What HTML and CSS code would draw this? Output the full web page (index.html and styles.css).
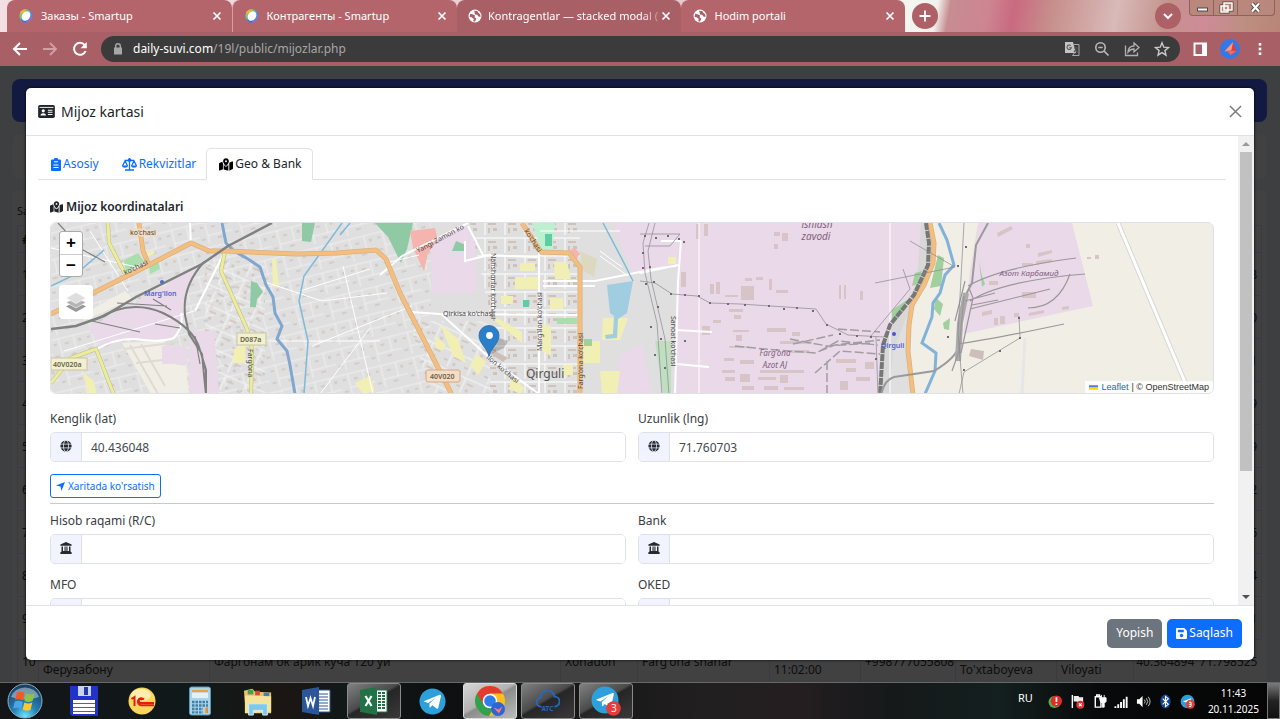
FILE: index.html
```html
<!DOCTYPE html>
<html lang="uz">
<head>
<meta charset="utf-8">
<meta name="viewport" content="width=device-width, initial-scale=1">
<title>Mijoz kartasi</title>
<link rel="stylesheet" href="styles.css">
</head>
<body>
<svg class="defs" width="0" height="0" aria-hidden="true">
  <defs>
    <linearGradient id="swirl" x1="0" y1="0" x2="1" y2="1"><stop offset="0" stop-color="#f6d94a"/><stop offset=".3" stop-color="#7cc36a"/><stop offset=".6" stop-color="#3f8fe0"/><stop offset="1" stop-color="#e0508c"/></linearGradient>
    <symbol id="i-smartup" viewBox="0 0 16 16"><circle cx="8" cy="8" r="7.6" fill="url(#swirl)"/><path d="M1 5a7.6 7.6 0 0 1 7-4.6L6 4z" fill="#f0b63a"/><path d="M2 12a7.6 7.6 0 0 0 6 3.6L9 12z" fill="#3a6fe0"/><ellipse cx="8" cy="8" rx="4.6" ry="5.8" transform="rotate(35 8 8)" fill="#fff"/></symbol>
    <symbol id="i-globe-solid" viewBox="0 0 16 16"><circle cx="8" cy="8" r="7.4" fill="#fff"/><path d="M2.6 5.4 6 6.2l2 1.2-.4 2L9.6 11 8 14.4a6.6 6.6 0 0 1-2-.4L6.600 11.500 4 9.500 1.800 9zM7 2l3.500.300L12 4.500l2 1.500.300 3-2.300-.500-1.500-2L8 6.400 7.500 4z" fill="#a95f66"/></symbol>
    <symbol id="i-x" viewBox="0 0 10 10"><path d="M1.500 1.500l7 7M8.500 1.500l-7 7" stroke="currentColor" stroke-width="1.700" fill="none"/></symbol>
    <symbol id="i-map" viewBox="0 0 576 512"><path fill="currentColor" d="M408 120c0 54.600-73.100 151.900-105.200 192-7.700 9.600-22 9.600-29.600 0C241.100 271.900 168 174.600 168 120 168 53.700 221.700 0 288 0s120 53.700 120 120zm-120 40a40 40 0 1 0 0-80 40 40 0 0 0 0 80zm136 44c5-11 9-22 12-33l106-42c16-6 34 5 34 23v265c0 10-6 19-15 22L424 512zM137.600 138.300c2.400 14.100 7.200 28.300 12.800 41.500 3 8 7 16 12 24V451L32.900 503C17 509 0 498 0 480V216c0-10 6-19 15-22zM327.800 332c14-17 36-46 57-78v258l-193-55V252c21 33 43 62 57 80 20 25 59 25 79 0z"/></symbol>
    <symbol id="i-globe" viewBox="0 0 16 16"><circle cx="8" cy="8" r="7.500" fill="#26292d"/><g fill="none" stroke="#eef2fd" stroke-width="1"><ellipse cx="8" cy="8" rx="3.400" ry="7.500"/><path d="M0 5.500h16M0 10.500h16"/></g></symbol>
    <symbol id="i-bank" viewBox="0 0 16 16"><path fill="#26292d" d="M8 0l7.500 3.300V5H.5V3.300zM2 6h2v6h2V6h1.500v6h1V6H10v6h2V6h2v6.500l1.500 1V16H.5v-2.500l1.500-1z"/></symbol>
    <symbol id="i-tg" viewBox="0 0 28 28"><circle cx="14" cy="14" r="13.500" fill="#2da0dc"/><path d="M5.500 13.500 21.500 7c1-.300 1.600.300 1.300 1.400L20 20.500c-.300 1-1 1.200-1.800.700l-4.300-3.200-2.100 2c-.500.400-.8.300-.9-.300l-.1-3.600L18 9.800 9.500 15.500l-3.800-1.200c-.9-.300-.9-.600-.2-.8z" fill="#fff"/></symbol>
  </defs>
</svg>

<header class="tabstrip">
  <nav class="tabs" aria-label="Browser">
    <div class="btab"><svg class="fav"><use href="#i-smartup"/></svg><a href="#t1">Заказы - Smartup</a><button class="bclose" aria-label="Close"><svg><use href="#i-x"/></svg></button></div>
    <div class="btab split"><svg class="fav"><use href="#i-smartup"/></svg><a href="#t2">Контрагенты - Smartup</a><button class="bclose" aria-label="Close"><svg><use href="#i-x"/></svg></button></div>
    <div class="btab active"><svg class="fav"><use href="#i-globe-solid"/></svg><a href="#t3">Kontragentlar — stacked modal (</a><button class="bclose" aria-label="Close"><svg><use href="#i-x"/></svg></button></div>
    <div class="btab"><svg class="fav"><use href="#i-globe-solid"/></svg><a href="#t4">Hodim portali</a><button class="bclose" aria-label="Close"><svg><use href="#i-x"/></svg></button></div>
  </nav>
  <button class="round plus" aria-label="New tab"><svg viewBox="0 0 12 12"><path d="M6 .5v11M.5 6h11" stroke="#fff" stroke-width="1.800"/></svg></button>
  <button class="round search" aria-label="Search tabs"><svg viewBox="0 0 12 12"><path d="M2 4l4 4 4-4" stroke="#fff" stroke-width="2" fill="none"/></svg></button>
  <div class="winbtns">
    <button aria-label="Minimize"><svg viewBox="0 0 24 15"><rect x="7.500" y="8" width="10" height="3" fill="#fff" stroke="#544" stroke-width="1"/></svg></button>
    <button aria-label="Restore"><svg viewBox="0 0 24 15"><path d="M10 3h8v7h-8zM7 6h7v6H7z" fill="none" stroke="#544" stroke-width="3"/><path d="M10 3h8v7h-8zM7 6h7v6H7z" fill="#b9877b" stroke="#fff" stroke-width="1.500"/></svg></button>
    <button class="wide" aria-label="Close window"><svg viewBox="0 0 24 15"><path d="M8 3.500l7 8M15 3.500l-7 8" stroke="#544" stroke-width="4"/><path d="M8 3.500l7 8M15 3.500l-7 8" stroke="#fff" stroke-width="2.200"/></svg></button>
  </div>
</header>

<div class="toolbar">
  <button class="tool" aria-label="Back"><svg viewBox="0 0 16 16"><path d="M15 8H2.500M8 2L2 8l6 6" fill="none" stroke="#fff" stroke-width="2"/></svg></button>
  <button class="tool" aria-label="Forward"><svg viewBox="0 0 16 16"><path d="M1 8h12.500M8 2l6 6-6 6" fill="none" stroke="#d0a0a4" stroke-width="1.800"/></svg></button>
  <button class="tool" aria-label="Reload"><svg viewBox="0 0 16 16"><path d="M13.600 10a6 6 0 1 1-.9-6" fill="none" stroke="#fff" stroke-width="2"/><path d="M14.800 1v6.200H8.600z" fill="#fff"/></svg></button>
  <div class="omnibox">
    <svg class="lock" viewBox="0 0 10 14"><path d="M1 5.500h8v7H1z" fill="#a7a7a7"/><path d="M2.700 6V4a2.300 2.300 0 0 1 4.600 0v2" fill="none" stroke="#a7a7a7" stroke-width="1.400"/></svg>
    <span class="url"><b>daily-suvi.com</b>/19l/public/mijozlar.php</span>
    <button class="tool" aria-label="Translate"><svg viewBox="0 0 16 16"><path d="M1 1h8l3 11H1z" fill="#c4c4c4"/><path d="M9.500 3.500H15V14.500H8.500l2-2.500" fill="none" stroke="#a8a8a8"/><path d="M6.800 4.700a2.200 2.200 0 1 0 .6 2H5.300M10 7h4M12 6v1c0 2-1 3-2 4M11 8.500l3 3" fill="none" stroke="#555" stroke-width="1.100"/></svg></button>
    <button class="tool" aria-label="Zoom"><svg viewBox="0 0 16 16"><circle cx="6.500" cy="6.500" r="4.700" fill="none" stroke="#b8b8b8" stroke-width="1.600"/><path d="M4.300 6.500h4.400M10 10l4.500 4.500" stroke="#b8b8b8" stroke-width="1.700"/></svg></button>
    <button class="tool" aria-label="Share"><svg viewBox="0 0 16 16"><path d="M1.500 4.500v10h12v-3" fill="none" stroke="#b0b0b0" stroke-width="1.300"/><path d="M4 11c.3-4 2.700-6 6-6V2l5 4.500-5 4.300V8C7.500 8 5.500 9 4 11z" fill="none" stroke="#b0b0b0" stroke-width="1.300"/></svg></button>
    <button class="tool" aria-label="Bookmark"><svg viewBox="0 0 16 16"><path d="M8 1.800l1.800 4.400 4.700.4-3.600 3 1.100 4.600L8 11.700l-4 2.500 1.100-4.600-3.600-3 4.700-.4z" fill="none" stroke="#c8c8c8" stroke-width="1.400"/></svg></button>
  </div>
  <button class="tool ext" aria-label="Side panel"><svg viewBox="0 0 16 16"><path d="M2.500 2.500h11.500v11.500H2.500z" fill="none" stroke="#fff" stroke-width="2"/><path d="M10 2h4v12h-4z" fill="#fff"/></svg></button>
  <button class="tool avatar" aria-label="Profile"><svg viewBox="0 0 20 20"><circle cx="10" cy="10" r="10" fill="#3478e8"/><path d="M4.500 12.500L13 3l.5 8z" fill="#ff9880"/><path d="M13 3l3.500 9-6 4z" fill="#dc3e3d"/><path d="M7 11.500l9.500.5-6 4z" fill="#f76a58"/></svg></button>
  <button class="tool" aria-label="Menu"><svg viewBox="0 0 16 16"><g fill="#fff"><rect x="6.700" y="2" width="2.600" height="2.600"/><rect x="6.700" y="6.700" width="2.600" height="2.600"/><rect x="6.700" y="11.400" width="2.600" height="2.600"/></g></svg></button>
</div>

<main class="stage">
  <section class="under" aria-hidden="true">
    <div class="navbar"></div>
    <div class="filter"></div>
    <div class="listcard">
      <p>Sa</p>
      <table>
        <colgroup><col class="c1"><col class="c2"><col class="c3"><col class="c4"><col class="c5"><col class="c6"><col class="c7"><col class="c8"><col class="c9"><col class="c10"></colgroup>
        <tr class="head"><th>#</th><th></th><th></th><th></th><th></th><th></th><th></th><th></th><th></th><th></th></tr>
        <tr><td>1</td><td></td><td></td><td></td><td></td><td></td><td></td><td></td><td></td><td class="end">8</td></tr>
        <tr><td>2</td><td></td><td></td><td></td><td></td><td></td><td></td><td></td><td></td><td class="end">0</td></tr>
        <tr><td>3</td><td></td><td></td><td></td><td></td><td></td><td></td><td></td><td></td><td class="end">1</td></tr>
        <tr><td>4</td><td></td><td></td><td></td><td></td><td></td><td></td><td></td><td></td><td class="end">9</td></tr>
        <tr><td>5</td><td></td><td></td><td></td><td></td><td></td><td></td><td></td><td></td><td class="end">9</td></tr>
        <tr><td>6</td><td></td><td></td><td></td><td></td><td></td><td></td><td></td><td></td><td class="end">2</td></tr>
        <tr><td>7</td><td></td><td></td><td></td><td></td><td></td><td></td><td></td><td></td><td class="end">6</td></tr>
        <tr><td>8</td><td></td><td></td><td></td><td></td><td></td><td></td><td></td><td></td><td class="end">4</td></tr>
        <tr><td>9</td><td></td><td></td><td></td><td></td><td></td><td></td><td></td><td></td><td class="end">1</td></tr>
        <tr><td>10</td><td><br>Ферузабону</td><td>Фаргонам ок арик куча 120 уй</td><td>Xonadon</td><td>Farg'ona shahar</td><td><br>11:02:00</td><td>+998777055808</td><td><br>To'xtaboyeva</td><td><br>Viloyati</td><td class="end pair"><span>40.364894</span><span>71.798525</span></td></tr>
      </table>
    </div>
  </section>

  <section class="modal" role="dialog" aria-labelledby="dlg-title">
    <header class="modal-head">
      <svg class="idcard" viewBox="0 0 18 14"><rect width="18" height="14" rx="1.800" fill="#212529"/><path d="M1.500 2.600h15" stroke="#fff" stroke-width="1"/><circle cx="5.500" cy="6.300" r="1.700" fill="#fff"/><path d="M2.500 11.300c0-3.300 6-3.300 6 0zM10.500 5h5v1.100h-5zM10.500 7.300h5v1.100h-5zM10.500 9.600h5v1.100h-5z" fill="#fff"/></svg>
      <h1 id="dlg-title">Mijoz kartasi</h1>
      <button class="dismiss" aria-label="Yopish"><svg viewBox="0 0 14 14"><path d="M1 1l12 12M13 1L1 13" stroke="#7b7b7b" stroke-width="1.600"/></svg></button>
    </header>

    <div class="modal-body">
      <div class="scroll">
        <nav class="nav-tabs">
          <a href="#asosiy"><svg viewBox="0 0 10 13"><path d="M1.300 1.500H3a2 2 0 0 1 4 0h1.700c.8 0 1.300.5 1.300 1.200v9c0 .8-.5 1.300-1.300 1.300H1.300C.5 13 0 12.500 0 11.700v-9c0-.7.5-1.200 1.300-1.200z" fill="currentColor"/><path d="M3 3.800h4M2.500 7h5M2.500 9.500h5" stroke="#fff" stroke-width="1"/></svg>Asosiy</a>
          <a href="#rekvizitlar"><svg class="w15" viewBox="0 0 15 13"><path d="M7.500 0v11.500M3 12h9M2.500 2.500h10M.5 8L3 3l2.500 5M9.500 8L12 3l2.500 5" fill="none" stroke="currentColor" stroke-width="1.300"/><path d="M0 7.500h6C6 10.500 0 10.500 0 7.500zM9 7.500h6c0 3-6 3-6 0z" fill="currentColor"/><circle cx="7.500" cy="2" r="1.800" fill="currentColor"/></svg>Rekvizitlar</a>
          <a href="#geo" class="current" aria-current="true"><svg class="w14"><use href="#i-map"/></svg>Geo &amp; Bank</a>
        </nav>

        <div class="pane">
          <h2><svg><use href="#i-map"/></svg>Mijoz koordinatalari</h2>
          <div class="map">
            <svg class="tiles" viewBox="51 222 1162 171" preserveAspectRatio="xMinYMin slice" role="img" aria-label="Qirguli">
              <defs>
                <pattern id="lanes" width="34" height="26" patternUnits="userSpaceOnUse" patternTransform="rotate(-14)"><path d="M0 4h34M9 4v22M24 4v14M9 18h25" stroke="#f4f4f4" stroke-width=".8" fill="none"/><path d="M3 8h3v2H3zM14 9h4v2h-4zM28 8h3v3h-3zM2 20h4v2H2zM18 21h5v2h-5z" fill="#d3ccc8"/></pattern>
                <pattern id="blocks" width="22" height="19" patternUnits="userSpaceOnUse" patternTransform="rotate(24)"><path d="M0 3h22M7 3v16" stroke="#f6f6f6" stroke-width="1" fill="none"/><path d="M10 7h7v2h-7zM1 12h4v2H1zM11 13h3v3h-3z" fill="#d3cac5"/></pattern>
                <pattern id="flats" width="20" height="18" patternUnits="userSpaceOnUse"><path d="M0 3h20M5 3v15" stroke="#fff" stroke-width="1" fill="none"/><path d="M8 6h8v2H8zM8 11h2v5H8zM13 11h4v3h-4z" fill="#cfc2ba"/></pattern>
              </defs>
              <path fill="#dfdfdf" d="M51 222h1162v172H51z"/>
              <path fill="url(#lanes)" d="M51 222h380v172H51z"/>
              <path fill="url(#blocks)" d="M385 262l30 50 80 80H445zM205 260h60v134h-60zM410 320h80v74h-60z"/>
              <path fill="url(#flats)" d="M470 222h110v172h-90v-82z"/>
              <path fill="#f1eee5" d="M122 342l42-2 2 22 20 3 3 28h-38z"/>
              <path d="M130 344l28 49M141 343l24 42M124 348l55-7M136 362l45-5" stroke="#dedbd3" stroke-width="2"/>
              <path fill="#f1eee6" d="M85 312l40-22 8 8-50 22z"/>
              <path fill="#ead9e8" d="M88 327l62-32 52-34-17 30-5 30-8 17-52-1-18 9zM162 345h25v18h-25zM190 330h24l5 63h-29zM430 240l33-18 12 20 2 49-44 2zM612 222h260l62 0-8 50-36 45-10 77H615l5-40 40-20V268l-27 5z"/>
              <path fill="#dfdfdf" d="M640 270l38-5-2 128h-24l-12-60z"/>
              <path fill="#d8d8d8" d="M921 222h12l-2 50-25 45-13 34-4 43h-12l4-50 36-62z"/>
              <path fill="#f1eee6" d="M932 222h281v172H910V312l24-50z"/>
              <path fill="#ead9e8" d="M978 222h94l21 83-130 28 7-63z"/>
              <path fill="#bfdfc0" d="M655 340h16v53h-8z"/>
              <path fill="#8fcaa5" d="M302 222h13l-4 19-9-1zM251 280l6 2 6 9-6 7-1 8h-6zM375 222h38l-6 26-6 14-13-26zM456 240l10 4v6h-14z"/>
              <path fill="#a8dfad" d="M124 259l14-7 6 8-18 11zM149 263l9-4 2 9-10 5zM557 317h20v6h-20z"/>
              <path fill="#f5b4ae" d="M410 230l25-3 3 12-10 13-4 18-11-23zM568 252l6-6 6 7-5 7z"/>
              <path fill="#bdf0d1" d="M532 222h23l-3 28h-10z"/><path d="M545 233h7v12h-7zM523 299h6v7h-6z" fill="#5fcda4"/>
              <path fill="#f1efb4" d="M272 258h4l3 28h-6zM234 348l12-5-1 19h-12zM83 372l10 7 4 14h-9zM147 252l6-3 2 3-8 5zM515 276h25v12h-25zM520 262h15v8h-15zM550 297h13v11h-13zM554 261h13l4 17h-16zM501 295h12v8h-12zM495 316l27 15v11l-27-22zM440 323l18 15 8 24-13-7zM477 353l9 8-8 13-8-10zM436 335l10 9-4 6-7-4zM355 382l15-7 5 15-12 3zM542 323l9 2v30l-9-5zM563 364h10v10h-10zM512 375l12 12-3 6-12-5zM583 340h17v22h-17zM603 317h25l-8 22h-18zM600 370h20l-3 23h-15zM668 256h8v7h-8z"/>
              <path fill="#ddd9c1" d="M580 250l17 8-3 18-12-7z"/>
              <path fill="#9fd09e" d="M584 338h8v7h-8zM938 254l6 3-3 28-11 2zM892 309l15-10-2 10-13 14zM915 272l7-2-4 13-6 2zM936 297l7 6-3 12-6-7zM943 322l7-5-1 12-5-1zM979 260l3 15 3 8-3 3z"/>
              <path fill="#d6c4c6" d="M696 223h3v15h-3zM704 223h4v12h-4zM774 231h6v4h-6zM782 232h6v8h-6zM774 243h4v5h-4zM745 277h7v3h-7zM756 276h7v3h-7zM741 285h13v14h-13zM710 283h4v10h-4zM716 281h4v12h-4zM725 294h13v2h-13zM769 278h3v11h-3zM776 289h12v3h-12zM839 284h2v14h-2zM844 284h2v14h-2zM860 290h3v9h-3zM681 271h5v15h-5zM729 308h14v3h-14zM734 314h7v4h-7zM713 319h8v3h-8zM702 325h8v9h-8zM733 329h16v2h-16zM767 327h19v4h-19zM736 334h6v6h-6zM792 331h8v4h-8zM729 345h20v2h-20zM780 340h32v3h-32zM791 349h18v3h-18zM724 357h10v3h-10zM740 359h14v4h-14zM722 369h13v3h-13zM725 376h10v4h-10zM740 373h10v8h-10zM742 385h12v4h-12zM760 369h44v3h-44zM758 376h18v3h-18zM780 374h8v8h-8zM764 385h14v4h-14zM784 386h20v3h-20zM836 358h20v4h-20zM846 367h10v4h-10zM856 376h14v4h-14zM840 380h8v9h-8zM865 361h9v7h-9zM997 232l14-7 2 3-15 8zM1038 252l14-3v3l-14 4zM1036 260l16-2v3l-16 3zM1022 262h11v3h-11zM1026 243h4v4h-4zM1022 291h14v6h-14zM989 280h9v4h-9zM982 311l10-2v4l-10 2zM994 317h4v7h-4zM1000 315h5v8h-5zM1014 312h5v4h-5zM1029 312l15-3v3l-15 3zM1062 306l7-1v3l-7 1zM1087 256h4v2h-4zM1095 254h4v4h-4z"/>
              <path fill="#cdbebb" d="M971 348l13 2-1 9-14-4zM495 350l13 7-5 4-12-8z"/>

              <g fill="none" stroke="#fff" stroke-width="2">
                <path d="M95 349q20-12 40-11 25 4 39-1 10-12 7-25M380 274l22-19 66-33M412 311l28 2 138 1M441 313l50 45 48 35M539 250v144M543 280h52l65-13 16-2M543 285h52M465 240v20l28-7v60M190 222l1 23M225 250l-30 60M468 225l15 29 55 2M681 240l-3 40-3 114M640 272l38-8M681 240h-20M676 329l36 2M676 363l33 3"/>
                <path stroke-width="1" d="M540 230h80M699 222v172M890 222v172M51 247l90 20M90 230l38 60M64 350l130-40M300 290l70-22M312 345l100-40M320 393l50-66M343 265l30 128M262 280l60 20 65-8M270 340h110M385 262l34-8M600 255l28 20M600 250l22 16"/>
              </g>
              <g fill="none"><path d="M1118 222l72 171" stroke="#d9d7d5" stroke-width="5"/><path d="M1118 222l72 171" stroke="#fff" stroke-width="3"/><path d="M1025 337l-3 56" stroke="#e6e6e8" stroke-width="3"/></g>

              <g fill="none" stroke="#7fb9da" stroke-width="2">
                <path stroke="#7fa7cf" stroke-width="3" d="M222 222l4 20 8 8 14 8 12 8 6 18 7 12 2 16 7 13-5 13 10 12 3 14 5 29"/>
                <path stroke-width="1.500" d="M342 222l-38 53-5 25 9 40-4 53M51 285l25-12 28-24M603 222l20 38 10 20M340 234l10-12"/>
                <path stroke="#83b2d8" stroke-width="3" d="M939 222l8 17 7 25-9 10-5 18-7 10-1 14-10 26 14 10-1 18-10 23"/>
              </g>
              <path fill="#a0cde0" d="M607 284l26-4-6 32-9 6-1 19-11 1-1-4 8-1 1-18-4-3z"/>

              <g fill="none" stroke-linejoin="round">
                <path d="M108 222l1 20 16 31M51 382l20-25 25-9 18 46M225 250l-4 20 26 58 5 20-1 46" stroke="#b9bd8a" stroke-width="4"/>
                <path d="M108 222l1 20 16 31M51 382l20-25 25-9 18 46M225 250l-4 20 26 58 5 20-1 46" stroke="#ecec9a" stroke-width="3"/>
                <path d="M51 313l92-46 48-25 18 8 18 0 70 3 40-1 39-3 10 9 14 34 52 102M139 222l4 28 5 12M522 222l19 29 28 1 11 14v128M930 222l4 20-1 20-9 22-12 20-3 20-1 26 5 44" stroke="#d9b27f" stroke-width="5"/>
                <path d="M51 313l92-46 48-25 18 8 18 0 70 3 40-1 39-3 10 9 14 34 52 102M139 222l4 28 5 12M522 222l19 29 28 1 11 14v128M930 222l4 20-1 20-9 22-12 20-3 20-1 26 5 44" stroke="#f4be80" stroke-width="3.500"/>
              </g>
              <g fill="none" stroke="#808080" stroke-width="2.500">
                <path d="M51 328l25-3 28-10 32-19 66-33 26-18 44-23"/>
                <path d="M204 261q-22 24-19 53l4 19 13 20 4 41M95 319q35-22 68-7 31 15 37 37l6 20v25" stroke-width="2"/>
                <path d="M926 222l3 20-1 22-14 30-24 30-7 20-3 51" stroke="#777" stroke-width="4" stroke-dasharray="7 1"/>
                <path d="M58 222l25 27 22 12M92 320l48 11M117 302l50 3M153 298l18 11M155 323l25 4M195 335l5 28" stroke-width="1.200"/>
                <path d="M988 222l-12 22-4 38-9 17-4 22v24q-3 12-25 25l-40 6q-10 3-13 18" stroke="#9a9a9a" stroke-width="2"/>
                <path d="M966 292l-6 30-2 38" stroke="#aaa" stroke-width="6"/>
                <path d="M964 295l-5 55-7 20M969 287l4 10-12 55M968 285q30-18 108-28M970 300q30-20 115-27M970 308l80-20M1070 273q-12 34-42 34M958 343q35-5 106-20M965 300l30-8M972 304l26-5M955 320l10-40" stroke="#9b969b" stroke-width="1.200"/>
              </g>
              <g fill="none" stroke="#a19ca3" stroke-width="1.500" stroke-dasharray="9 3"><path d="M735 345l30 3 50 4 20-8 45-5M790 338l37 7 46-3M793 343l40-9M820 350l18-10 40 4M838 328l42 3M815 372l25-22 40 3M827 393v-35"/></g>
              <g fill="none" stroke="#8b8790" stroke-width=".7">
                <path d="M649 222l-6 20 2 30 12 50 5 72M655 222l-7 28 3 28 14 60 4 56M640 280l15 2 17 11 25 2 13 7 30 1 76 5 10 15 22 11 36 2M640 233h40l-10 12h-25M876 336l2 58M903 268l7 20-40 48M910 240l45 26-80 16M964 222l-6 110 5 61M959 393l5-22 56-34-1-22"/>
              </g>
              <g fill="#6f6b72"><path d="M644 234h2v2h-2zM655 236h2v2h-2zM667 234h2v2h-2zM678 237h2v2h-2zM683 240h2v2h-2zM642 251h2v2h-2zM642 266h2v2h-2zM649 265h2v2h-2zM645 282h2v2h-2zM653 280h2v2h-2zM670 292h2v2h-2zM684 293h2v2h-2zM698 294h2v2h-2zM709 301h2v2h-2zM727 302h2v2h-2zM744 303h2v2h-2zM768 304h2v2h-2zM783 307h2v2h-2zM796 306h2v2h-2zM812 309h2v2h-2zM826 323h2v2h-2zM839 332h2v2h-2zM856 334h2v2h-2zM870 335h2v2h-2zM657 305h2v2h-2zM650 325h2v2h-2zM660 337h2v2h-2zM654 353h2v2h-2zM664 366h2v2h-2zM684 339h2v2h-2zM875 357h2v2h-2zM957 264h2v2h-2zM965 245h2v2h-2zM947 335h2v2h-2zM963 368h2v2h-2zM999 349h2v2h-2zM1019 336h2v2h-2zM1018 316h2v2h-2z"/></g>

              <g stroke="#c9c69f" fill="#f2f0cf"><rect x="237" y="332" width="29" height="12"/><rect x="51" y="357" width="36" height="12"/></g>
              <rect x="426" y="369" width="34" height="12" rx="2" fill="#f5dcc5" stroke="#d3a982"/>
              <g class="road-code"><text x="240" y="341">D087a</text><text x="53" y="366">40V020a</text><text x="430" y="378">40V020</text></g>
              <g class="street">
                <text x="144" y="295" class="station">Marg'ilon</text>
                <text x="881" y="347" class="station">Qirguli</text>
                <text x="443" y="315">Qirkisa ko'chasi</text>
                <text transform="translate(542 350) rotate(-90)">Marg'ilon ko'chasi</text>
                <text transform="translate(583 388) rotate(-90)">Farg'ona ko'chasi</text>
                <text transform="translate(491 252) rotate(90)">Nahshonlar ko'chasi</text>
                <text transform="translate(671 315) rotate(90)">Sanoat ko'chasi</text>
                <text transform="translate(248 348) rotate(90)">Farg'ona</text>
                <text transform="translate(418 252) rotate(-28)">Yangi Zamon ko</text>
                <text transform="translate(486 357) rotate(40)">ilon ko'chasi</text>
                <text transform="translate(524 230) rotate(57)">ko'chasi</text>
                <text transform="translate(125 274) rotate(-25)">ko'chasi</text>
              </g>
              <g class="halo"><text x="130" y="234">ko'chasi</text></g>
              <text class="place" x="526" y="377">Qirguli</text>
              <g class="zone"><text x="817" y="227" class="big">ishlash</text><text x="816" y="239" class="big">zavodi</text><text x="775" y="355">Farg'ona</text><text x="775" y="367">Azot AJ</text><text x="1029" y="275">Азот Карбамид</text></g>
              <circle cx="162" cy="281" r="2" fill="#5967c8"/><circle cx="894" cy="333" r="2" fill="#4955d0"/>
              <path d="M489 354l10-17 9 3-4 7z" fill="#0003"/>
              <path d="M489 355c-2-8-10-13-10-20.500a10 10 0 0 1 20 0C499 342 491 347 489 355z" fill="#2a7fc8" stroke="#1d68a8" stroke-width=".8"/><circle cx="489.500" cy="334.500" r="3.400" fill="#fff"/>
            </svg>
            <div class="map-tools">
              <div class="zoom"><button aria-label="Zoom in">+</button><button aria-label="Zoom out">−</button></div>
              <button class="layers" aria-label="Layers"><svg viewBox="0 0 22 22"><path d="M11 10l10 5.500L11 21 1 15.500z" fill="#999"/><path d="M11 6l10 5.500L11 17 1 11.500z" fill="#b5b5b5" stroke="#fff" stroke-width=".6"/><path d="M11 1.500L21 7 11 12.500 1 7z" fill="#dedede" stroke="#fff" stroke-width=".6"/></svg></button>
            </div>
            <div class="credit"><svg viewBox="0 0 12 8"><path fill="#4c7be1" d="M0 1h12v3H0z"/><path fill="#ffd500" d="M0 4h12v3H0z"/></svg><a href="#leaflet">Leaflet</a> | © OpenStreetMap</div>
          </div>

          <div class="grid">
            <div class="field"><label for="lat">Kenglik (lat)</label><div class="group"><span><svg><use href="#i-globe"/></svg></span><input id="lat" value="40.436048"></div></div>
            <div class="field"><label for="lng">Uzunlik (lng)</label><div class="group"><span><svg><use href="#i-globe"/></svg></span><input id="lng" value="71.760703"></div></div>
          </div>
          <button class="locate"><svg viewBox="0 0 10 10"><path d="M10 0L6 10 5 5 0 4z" fill="currentColor"/></svg>Xaritada ko'rsatish</button>
          <hr>
          <div class="grid second">
            <div class="field"><label for="rc">Hisob raqami (R/C)</label><div class="group"><span><svg><use href="#i-bank"/></svg></span><input id="rc"></div></div>
            <div class="field"><label for="bank">Bank</label><div class="group"><span><svg><use href="#i-bank"/></svg></span><input id="bank"></div></div>
            <div class="field"><label for="mfo">MFO</label><div class="group"><span></span><input id="mfo"></div></div>
            <div class="field"><label for="oked">OKED</label><div class="group"><span></span><input id="oked"></div></div>
          </div>
        </div>
      </div>
      <div class="rail" aria-hidden="true">
        <svg viewBox="0 0 16 16"><path d="M4 10h8L8 6z" fill="#9a9a9a"/></svg>
        <div class="track"><div class="thumb"></div></div>
        <svg viewBox="0 0 16 16"><path d="M4 6h8l-4 4z" fill="#505050"/></svg>
      </div>
    </div>

    <footer class="modal-foot">
      <button class="btn gray">Yopish</button>
      <button class="btn blue"><svg viewBox="0 0 12 12"><path d="M1.500 0H9l3 3v7.500c0 1-.5 1.500-1.500 1.500h-9C.5 12 0 11.500 0 10.500v-9C0 .5.5 0 1.500 0z" fill="#fff"/><path d="M2 2h6.500v2.500H2z" fill="#0d6efd"/><circle cx="6" cy="8.200" r="1.800" fill="#0d6efd"/></svg>Saqlash</button>
    </footer>
  </section>
</main>

<footer class="taskbar">
  <button class="start" aria-label="Start"><svg viewBox="0 0 36 36"><defs><radialGradient id="orb" cx=".5" cy=".95" r=".9"><stop offset="0" stop-color="#6fe4ff"/><stop offset=".4" stop-color="#2482b4"/><stop offset="1" stop-color="#1a3f63"/></radialGradient></defs><circle cx="18" cy="18" r="17" fill="url(#orb)" stroke="#8fb0c4"/><path d="M4 14a14.500 13 0 0 1 28 0q-14 5-28 0z" fill="#cfe0ea" opacity=".5"/><path d="M10 9.500q4-1.500 7.500.5l-1.500 7.500q-4-2-8-.5z" fill="#ee5a2a"/><path d="M19 10.500q4 2 8.500 0L25.500 18q-4 2-8 0z" fill="#8cc63f"/><path d="M7.800 18.500q4-1.500 8 .5L14.200 26q-4-2-8-.5z" fill="#4aa5ea"/><path d="M17.300 19.500q4 2 8 0L23.500 27q-4 1.500-7.800-.5z" fill="#fdc82f"/></svg></button>
  <div class="apps">
    <button aria-label="Total Commander"><svg viewBox="0 0 30 30"><path d="M1 0h28v30H3l-2-2z" fill="#2133c8"/><path d="M9 0h13v10H9z" fill="#c9d4ea"/><path d="M15 1h4v8h-4z" fill="#2438a8"/><path d="M4 14h22v14H4z" fill="#fff"/><path d="M4 17.500h22M4 21.500h22M4 25.500h22" stroke="#d3333c" stroke-width="1.200"/></svg></button>
    <button aria-label="1C"><svg viewBox="0 0 30 30"><circle cx="15" cy="15" r="13.500" fill="#f9d65c"/><ellipse cx="14" cy="9" rx="10" ry="6" fill="#fdeeb0"/><path d="M4.500 13l3-2v9M17 13.500a3.500 3.500 0 1 0-2.500 5.800H27M15.500 14a2 2 0 1 0-1.500 3h13" fill="none" stroke="#df1f17" stroke-width="2"/></svg></button>
    <button aria-label="Calculator"><svg viewBox="0 0 30 30"><rect x="4.500" y="1" width="21" height="28" rx="2" fill="#a9d4ea" stroke="#5e98b8"/><path d="M7 4h16v2.500H7z" fill="#e9a44a"/><path d="M7 6.500h16V12H7z" fill="#e2f1f8"/><path d="M7 16h16M7 19.500h16M7 23h11M7 26.300h11" stroke="#427fa6" stroke-width="2.300" stroke-dasharray="2.500 1"/><path d="M20.500 21.500H23V27h-2.500z" fill="#ee8a28"/></svg></button>
    <button aria-label="Explorer"><svg viewBox="0 0 32 30"><path d="M1 4l9-2 3 3 17 1v22H3z" fill="#e9c46a"/><path d="M5 3h6v5H5z" fill="#3da550"/><path d="M13 4h5v5h-5z" fill="#d34c39"/><path d="M22 6h6v5h-6z" fill="#4a7ac0"/><path d="M2 9l28 1v17l-28 1z" fill="#f7e29a"/><path d="M6 18h20v12h-5v-5H11v5H6z" fill="#7fc8e8" stroke="#d3effa"/></svg></button>
    <button aria-label="Word"><svg viewBox="0 0 30 30"><path d="M16 4h13v22H16z" fill="#fff" stroke="#2b579a"/><path d="M18 8h9M18 11h9M18 14h9M18 17h9M18 20h9M18 23h9" stroke="#2b579a"/><path d="M1 4l17-3v28L1 26z" fill="#2b579a"/><path d="M5 11l2 9 2.500-8 2.500 8 2-9" fill="none" stroke="#fff" stroke-width="1.800"/></svg></button>
    <button class="open" aria-label="Excel"><svg viewBox="0 0 30 30"><path d="M16 4h12v22H16z" fill="#fff" stroke="#217346"/><path d="M19 7h7M19 10h7M19 13h7M19 16h7M19 19h7M19 22h7" stroke="#217346" stroke-width="1.800" stroke-dasharray="3 1"/><path d="M1 4l17-3v28L1 26z" fill="#217346"/><path d="M6.500 10l6 10M12.500 10l-6 10" stroke="#fff" stroke-width="2.200"/></svg></button>
    <button aria-label="Telegram"><svg class="tg"><use href="#i-tg"/></svg></button>
    <button class="open lit" aria-label="Chrome"><svg viewBox="0 0 30 30"><circle cx="15" cy="15" r="15" fill="#fbc116"/><path d="M2 7.500A15 15 0 0 0 14 30l6.500-12L15 15z" fill="#31a04f"/><path d="M2 7.500A15 15 0 0 1 28 7.500H15L8.500 18.500z" fill="#e33b2e"/><circle cx="15" cy="15" r="7.300" fill="#fff"/><circle cx="15" cy="15" r="5.800" fill="#2f7de9"/><circle cx="23" cy="23" r="7" fill="#3063d8"/><path d="M18.500 21.500l5 2 4-3-3.500 7z" fill="#ff7b73"/></svg></button>
    <button class="open" aria-label="ATC"><svg class="small" viewBox="0 0 30 30"><path d="M7 22H6.500a5.500 5.500 0 0 1-.5-11 8.500 8.500 0 0 1 17-1.500 6.200 6.200 0 0 1 .5 12.500H23" fill="none" stroke="#2767bd" stroke-width="2.300"/><text x="7" y="27" class="atc">ATC</text></svg></button>
    <button class="open" aria-label="Telegram, 3"><svg viewBox="0 0 30 30"><use href="#i-tg" width="28" height="28"/><circle cx="22.500" cy="22.500" r="7.300" fill="#e93a3a"/><text x="20" y="26" class="badge">3</text></svg></button>
  </div>
  <div class="tray">
    <span class="lang">RU</span>
    <svg viewBox="0 0 16 16"><circle cx="7" cy="8.500" r="6.500" fill="#4fae48"/><circle cx="9" cy="7.500" r="6" fill="#e02b28"/><path d="M9 3.500v5M9 10v1.700" stroke="#fff" stroke-width="1.800"/></svg>
    <svg viewBox="0 0 16 16"><path d="M2.500 1v14" stroke="#fff" stroke-width="1.500"/><path d="M4 2h5l1 1.500h4V9H8L7 8H4z" fill="#eee"/><circle cx="11" cy="11.500" r="4.300" fill="#d33"/><path d="M9.500 10l3 3M12.500 10l-3 3" stroke="#fff" stroke-width="1.300"/></svg>
    <svg viewBox="0 0 16 16"><path d="M3.500 3h6v11h-6zM5 1h3v2H5z" fill="none" stroke="#fff" stroke-width="1.500"/><path d="M8 4h7v4l-2 2v4h-2v-4L9 8zM10 1v3M13 1v3" fill="#fff" stroke="#fff"/></svg>
    <svg viewBox="0 0 16 16"><path d="M1.500 15v-2M4.500 15v-4M7.500 15V8.500M10.500 15V5.500M13.500 15V3" stroke="#fff" stroke-width="2"/></svg>
    <svg viewBox="0 0 16 16"><path d="M1 5.500h2.500L7 2v12l-3.500-3.500H1z" fill="#fff"/><path d="M9 6q1.500 2 0 4M11 4.500q3 3.500 0 7M13 3q4 5 0 10" fill="none" stroke="#ccc"/></svg>
    <svg viewBox="0 0 16 16"><ellipse cx="8" cy="8" rx="5.500" ry="7.500" fill="#16438e"/><path d="M5 5l6 6-3 2.500v-11L11 5l-6 6" fill="none" stroke="#fff" stroke-width="1.200"/></svg>
    <svg viewBox="0 0 16 16"><circle cx="8" cy="8" r="7.300" fill="#2da0dc"/><path d="M3 8l9-3.500L10.500 12 7 9z" fill="#fff"/><circle cx="11" cy="11" r="4.800" fill="#e0403a"/><path d="M9.500 8.700h2.300v4.600H9.500M9.800 11h2" fill="none" stroke="#fff"/></svg>
    <time>11:43<br>20.11.2025</time>
  </div>
  <button class="peek" aria-label="Desktop"></button>
</footer>
</body>
</html>
```

FILE: styles.css
```css
* { box-sizing: border-box; }
body { margin: 0; height: 100vh; display: flex; flex-direction: column; overflow: hidden; font: 12px/18px "Noto Sans", "Open Sans", sans-serif; color: #212529; }
button { font: inherit; color: inherit; border: 0; padding: 0; background: none; display: flex; align-items: center; justify-content: center; }
a { text-decoration: none; color: inherit; }
svg { display: block; flex: none; }
.defs { position: absolute; }

/* browser tabs */
.tabstrip { height: 32px; flex: none; display: flex; align-items: center; padding: 0 5px 0 7px; background: linear-gradient(100deg, #f3dfe3 0 1%, #e8c5ca 60%, #f4f6f1 71%, #f1f0ea 73%, #c78c92 74%, #cd8592 77%, #c96a80 79%, #c78f8c 82%, #d8bab8 87%, #c4928d 91%, #cf8b97 94%, #bd8f82 97%, #b98578); }
.tabs { display: flex; flex: 0 1 898px; min-width: 0; height: 100%; }
.btab { flex: 1 1 0; min-width: 0; display: flex; align-items: center; gap: 8px; padding: 0 10px 0 12px; background: #b4656b; color: #fff; border-radius: 8px 8px 0 0; font-size: 11px; }
.btab.split { border-left: 1px solid #d5a0a3; }
.btab.active { gap: 6px; padding-left: 11px; background: #a95f66; }
.btab a { flex: 1; overflow: hidden; white-space: nowrap; }
.btab.active a { margin-right: -6px; mask-image: linear-gradient(90deg, #000 88%, #0003); }
.fav { width: 14px; height: 14px; }
.bclose svg { width: 10px; height: 10px; }
.round { width: 26px; height: 26px; border-radius: 50%; background: #ae6067; flex: none; }
.round svg { width: 12px; height: 12px; }
.plus { margin-left: 7px; }
.search { margin-left: auto; }
.winbtns { display: flex; align-self: flex-start; margin-left: 8px; border: 1px solid #8b625c; border-top: 0; border-radius: 0 0 4px 4px; background: #b9877b; }
.winbtns button { width: 24px; height: 15px; border-right: 1px solid #8b625c; }
.winbtns .wide { width: 36px; border-right: 0; }
.winbtns svg { width: 24px; height: 15px; }

.toolbar { height: 34px; flex: none; display: flex; align-items: center; gap: 14px; padding: 0 12px; background: #a95f66; }
.tool svg { width: 16px; height: 16px; }
.omnibox { flex: 1; min-width: 0; height: 26px; margin-left: -1px; display: flex; align-items: center; gap: 14px; padding: 0 10px 0 12px; border-radius: 13px; background: #3b3b3b; }
.lock { width: 10px; height: 14px; }
.url { flex: 1; margin-left: -4px; color: #a7a7a7; white-space: nowrap; overflow: hidden; }
.url b { font-weight: 400; color: #fff; }
.ext { margin-left: -2px; }
.avatar { margin: 0 -2px; }
.avatar svg { width: 20px; height: 20px; }

/* dimmed page and dialog share one cell */
.stage { flex: 1; min-height: 0; display: grid; grid-template: minmax(0, 1fr) / minmax(0, 1fr); background: #3e3f41; }
.stage > * { grid-area: 1 / 1; min-height: 0; }
.under { overflow: hidden; padding: 13px 13px 0 12px; color: #0c0d0e; font-size: 12px; line-height: 17px; }
.navbar { height: 43px; border-radius: 8px; background: #131a41; }
.filter { height: 44px; margin-top: 13px; border-radius: 6px; background: #414141; }
.listcard { margin-top: 12px; padding: 10px 5px 0; background: #414141; }
.listcard p { margin: 0 0 4px; height: 20px; line-height: 20px; font-size: 11px; }
.listcard table { width: 100%; border-collapse: collapse; table-layout: fixed; }
.listcard td, .listcard th { height: 43px; padding: 0 4px; border: 1px solid #393a44; white-space: nowrap; text-align: left; }
.listcard .head th { height: 27px; }
.listcard .end { text-align: right; }
.listcard .pair { display: flex; justify-content: flex-end; align-items: center; gap: 5px; border-width: 0; }
.c1 { width: 21px; } .c2 { width: 171px; } .c3 { width: 351px; } .c4 { width: 77px; } .c5 { width: 132px; }
.c6 { width: 91px; } .c7 { width: 95px; } .c8 { width: 101px; } .c9 { width: 77px; }

.modal { margin: 22px 26px; display: flex; flex-direction: column; overflow: hidden; background: #fff; border-radius: 5px; box-shadow: 0 0 3px #000; }
.modal-head { height: 48px; flex: none; display: flex; align-items: center; gap: 6px; padding: 0 12px; border-bottom: 1px solid #dee2e6; }
.idcard { width: 17px; height: 13px; }
h1 { flex: 1; margin: 0; font-size: 14px; line-height: 20px; font-weight: 400; }
.dismiss svg { width: 13px; height: 13px; }
.modal-body { flex: 1; min-height: 0; display: flex; }
.scroll { flex: 1; min-width: 0; overflow: hidden; padding: 12px; }
.rail { width: 16px; display: flex; flex-direction: column; background: #f1f1f1; }
.rail > svg { width: 16px; height: 16px; }
.track { flex: 1; padding: 0 2px; }
.thumb { height: 73%; background: #c1c1c1; }

.nav-tabs { display: flex; height: 32px; border-bottom: 1px solid #dee2e6; color: #0d6efd; }
.nav-tabs a { display: flex; align-items: center; gap: 2px; height: 32px; padding: 0 9px 0 12px; border: 1px solid transparent; border-radius: 5px 5px 0 0; }
.nav-tabs a.current { padding-right: 11px; background: #fff; color: #212529; border-color: #dee2e6 #dee2e6 #fff; }
.nav-tabs svg { width: 10px; height: 13px; }
.nav-tabs .w15 { width: 15px; }
.nav-tabs .w14 { width: 14px; color: #000; }
.pane { padding: 18px 12px 0; }
h2 { display: flex; align-items: center; gap: 3px; margin: 0 0 6px; font-size: 12px; line-height: 18px; font-weight: 600; }
h2 svg { width: 13px; height: 12px; }

.map { position: relative; height: 172px; border: 1px solid #dee2e6; border-radius: 6px; overflow: hidden; }
.tiles { width: 100%; height: 100%; }
.tiles text { font-family: "Noto Sans", sans-serif; }
.road-code text { font-size: 7px; font-weight: 600; fill: #666247; }
.street text, .halo text { font-size: 7px; fill: #4b4948; }
.halo text { stroke: #f3dcc3; stroke-width: 3px; paint-order: stroke; }
.street .station { font-weight: 600; fill: #5561cc; }
.place { font-size: 12px; fill: #555; }
.zone text { font-size: 8px; font-style: italic; fill: #80607d; text-anchor: middle; }
.zone .big { font-size: 10px; }
.map-tools { position: absolute; left: 8px; top: 8px; display: grid; gap: 8px; }
.zoom { width: 24px; border: 1px solid #aaa; border-radius: 3px; background: #fff; overflow: hidden; }
.zoom button { width: 22px; height: 22px; font: bold 17px/22px "Liberation Sans", sans-serif; color: #000; }
.zoom button + button { border-top: 1px solid #ccc; }
.layers { width: 34px; height: 34px; background: #fff; border-radius: 4px; }
.layers svg { width: 22px; height: 22px; }
.credit { position: absolute; right: 0; bottom: 0; display: flex; align-items: center; gap: 3px; padding: 0 4px; background: #fffc; font: 9px/12px "Liberation Sans", sans-serif; color: #333; }
.credit svg { width: 9px; height: 7px; }
.credit a { color: #0078a8; }

.grid { display: grid; grid-template-columns: 1fr 1fr; gap: 12px; margin-top: 16px; }
.field label { display: block; margin-bottom: 4px; height: 18px; color: #3a3e42; }
.group { display: flex; height: 30px; border: 1px solid #dee2e6; border-radius: 5px; overflow: hidden; }
.group span { width: 31px; flex: none; display: flex; justify-content: center; padding-top: 7px; background: #f1f4fe; border-right: 1px solid #dee2e6; }
.group svg { width: 12px; height: 12px; }
.group input { flex: 1; min-width: 0; border: 0; padding: 2px 9px 0; font: inherit; color: #444a50; background: #fff; }
.locate { height: 24px; margin-top: 12px; padding: 0 5px; gap: 3px; border: 1px solid #0d6efd; border-radius: 3px; color: #0d6efd; font-size: 10px; }
.locate svg { width: 9px; height: 9px; }
hr { margin: 5px 0 0; border: 0; border-top: 1px solid #c8c9ca; }
.second { margin-top: 8px; }

.modal-foot { height: 55px; flex: none; display: flex; align-items: center; justify-content: flex-end; gap: 5px; padding: 0 12px; border-top: 1px solid #dee2e6; }
.btn { height: 29px; padding: 0 9px; gap: 2px; border-radius: 5px; color: #fff; }
.btn svg { width: 11px; height: 11px; }
.gray { background: #6c757d; }
.blue { background: #0d6efd; }

.taskbar { height: 37px; flex: none; display: flex; align-items: center; border-top: 1px solid #66696a; background: linear-gradient(90deg, #131517, #10191a 15%, #1b1613 22%, #10191a 28%, #0d0f10 35%, #211f20 55%, #251e20 62%, #15191a 70%, #141f1f 78%, #08090a 86%, #050505); color: #fff; }
.start { width: 50px; flex: none; }
.start svg { width: 36px; height: 36px; }
.apps { display: flex; gap: 4px; margin-left: 7px; }
.apps button { width: 54px; height: 36px; }
.apps svg { width: 30px; height: 30px; }
.apps .tg { width: 27px; height: 27px; }
.apps .small { width: 24px; height: 24px; }
.apps .open { border: 1px solid #8b8b8b; border-radius: 3px; background: linear-gradient(150deg, #818181, #4b4b4b 45%, #262626 50%, #3b3838); }
.apps .lit { background: linear-gradient(150deg, #d6d6d6, #b2b2b2 45%, #8c8c8c 50%, #bcbcbc); border-color: #ddd; }
.atc { font: bold 8px "Noto Sans", sans-serif; fill: #2767bd; }
.badge { font: 10px "Noto Sans", sans-serif; fill: #fff; }
.tray { margin-left: auto; display: flex; align-items: center; gap: 7px; }
.tray svg { width: 15px; height: 15px; }
.lang { margin: 0 8px 6px 0; font-size: 11px; }
.tray time { margin: 0 8px 0 6px; text-align: center; font-size: 10px; line-height: 16px; }
.peek { width: 13px; height: 36px; flex: none; border: 1px solid #777; background: linear-gradient(#777, #222 50%, #111); }
```
